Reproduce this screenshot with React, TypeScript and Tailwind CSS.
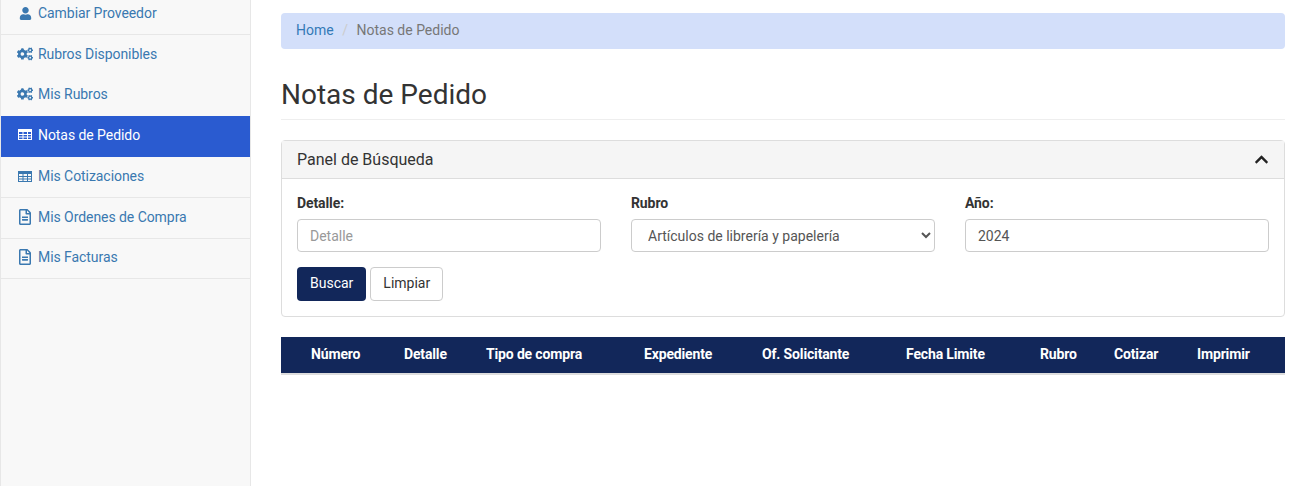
import { FaUser, FaCogs, FaRegFileAlt, FaChevronUp } from "react-icons/fa";

function TableIcon() {
  return (
    <svg width="14" height="11" viewBox="0 0 14 11" fill="none" stroke="currentColor" strokeWidth="1">
      <rect x="0.5" y="0.5" width="13" height="10" />
      <path d="M0 1.5h14M0 2.5h14M0 5.5h14M0 8h14M5 1v10M9.5 1v10" />
    </svg>
  );
}

const menu = [
  { label: "Cambiar Proveedor", icon: <FaUser className="text-[13px]" />, cls: "h-[35px] pb-[8px] border-b border-[#e7e7e7]" },
  { label: "Rubros Disponibles", icon: <FaCogs className="text-[16px]" />, cls: "h-[40px] pb-[2px]" },
  { label: "Mis Rubros", icon: <FaCogs className="text-[16px]" />, cls: "h-[41px] pb-[4px]" },
  { label: "Notas de Pedido", icon: <TableIcon />, cls: "h-[41px] pb-[4px] bg-[#2a5bd0] text-white", active: true },
  { label: "Mis Cotizaciones", icon: <TableIcon />, cls: "h-[41px] pb-[2px] border-b border-[#e7e7e7]" },
  { label: "Mis Ordenes de Compra", icon: <FaRegFileAlt className="text-[16px]" />, cls: "h-[41px] pb-[2px] border-b border-[#e7e7e7]" },
  { label: "Mis Facturas", icon: <FaRegFileAlt className="text-[16px]" />, cls: "h-[40px] pb-[3px] border-b border-[#e7e7e7]" },
];

const columns = [
  { t: "Número", w: "w-[123px] pl-[30px]" },
  { t: "Detalle", w: "w-[82px]" },
  { t: "Tipo de compra", w: "w-[158px]" },
  { t: "Expediente", w: "w-[118px]" },
  { t: "Of. Solicitante", w: "w-[144px]" },
  { t: "Fecha Limite", w: "w-[134px]" },
  { t: "Rubro", w: "w-[74px]" },
  { t: "Cotizar", w: "w-[83px]" },
  { t: "Imprimir", w: "" },
];

function Sidebar() {
  return (
    <aside className="w-[251px] shrink-0 border-x border-[#e7e7e7] bg-[#f8f8f8]">
      {menu.map((m) => (
        <a
          key={m.label}
          href="#"
          className={`flex items-center pl-[16px] tracking-[-0.06px] ${m.active ? "" : "text-[#3a78b0]"} ${m.cls}`}
        >
          <span className="flex w-[16px] shrink-0 justify-center">{m.icon}</span>
          <span className="ml-[5px]">{m.label}</span>
        </a>
      ))}
    </aside>
  );
}

function SearchPanel() {
  return (
    <section className="mt-[20px] rounded border border-[#dddddd] bg-white">
      <div className="flex h-[38px] items-center justify-between border-b border-[#dddddd] bg-[#f5f5f5] px-[15px] text-[16px] text-[#333333]">
        <span>Panel de Búsqueda</span>
        <FaChevronUp className="text-[15px] text-[#222222]" />
      </div>
      <div className="p-[15px]">
        <div className="grid grid-cols-3 gap-[30px]">
          <label className="block">
            <span className="block h-[25px] font-bold leading-[19px] tracking-[-0.1px] text-[#333333]">Detalle:</span>
            <input
              placeholder="Detalle"
              className="h-[33px] w-full rounded border border-[#cccccc] bg-white px-3 text-[14px] text-[#555555] placeholder:text-[#999999]"
            />
          </label>
          <label className="block">
            <span className="block h-[25px] font-bold leading-[19px] tracking-[-0.1px] text-[#333333]">Rubro</span>
            <select
              defaultValue="a"
              className="h-[33px] w-full rounded border border-[#cccccc] bg-white px-3 text-[14px] text-[#555555]"
            >
              <option value="a">Artículos de librería y papelería</option>
            </select>
          </label>
          <label className="block">
            <span className="block h-[25px] font-bold leading-[19px] tracking-[-0.1px] text-[#333333]">Año:</span>
            <input
              defaultValue="2024"
              className="h-[33px] w-full rounded border border-[#cccccc] bg-white px-3 text-[14px] text-[#555555]"
            />
          </label>
        </div>
        <div className="mt-[15px] flex gap-1">
          <button className="h-[34px] rounded bg-[#12275a] px-[13px] pb-[2px] text-white">Buscar</button>
          <button className="h-[34px] rounded border border-[#cccccc] bg-white px-3 pb-[2px] text-[#333333]">Limpiar</button>
        </div>
      </div>
    </section>
  );
}

export default function App() {
  return (
    <div className="flex h-[486px] overflow-hidden bg-white font-['Roboto',sans-serif] text-[14px] leading-[20px]">
      <Sidebar />
      <main className="min-w-0 flex-1 pl-[30px] pr-[28px] pt-[13px]">
        <nav className="flex h-[36px] items-center rounded bg-[#d3dffa] px-[15px] pb-[2px]">
          <a href="#" className="text-[#337ab7]">Home</a>
          <span className="px-[8.5px] text-[#cccccc]">/</span>
          <span className="text-[#777777]">Notas de Pedido</span>
        </nav>
        <h1 className="mt-[28px] border-b border-[#eeeeee] pb-[7px] text-[28px] font-normal leading-[35px] text-[#333333]">
          Notas de Pedido
        </h1>
        <SearchPanel />
        <table className="mt-[20px] w-full table-fixed border-b-2 border-[#dddddd]">
          <thead>
            <tr className="h-[37px] bg-[#12275a] text-left text-white">
              {columns.map((c) => (
                <th key={c.t} className={`p-0 pb-[2px] font-bold tracking-[-0.15px] ${c.w}`}>
                  {c.t}
                </th>
              ))}
            </tr>
          </thead>
        </table>
      </main>
    </div>
  );
}
